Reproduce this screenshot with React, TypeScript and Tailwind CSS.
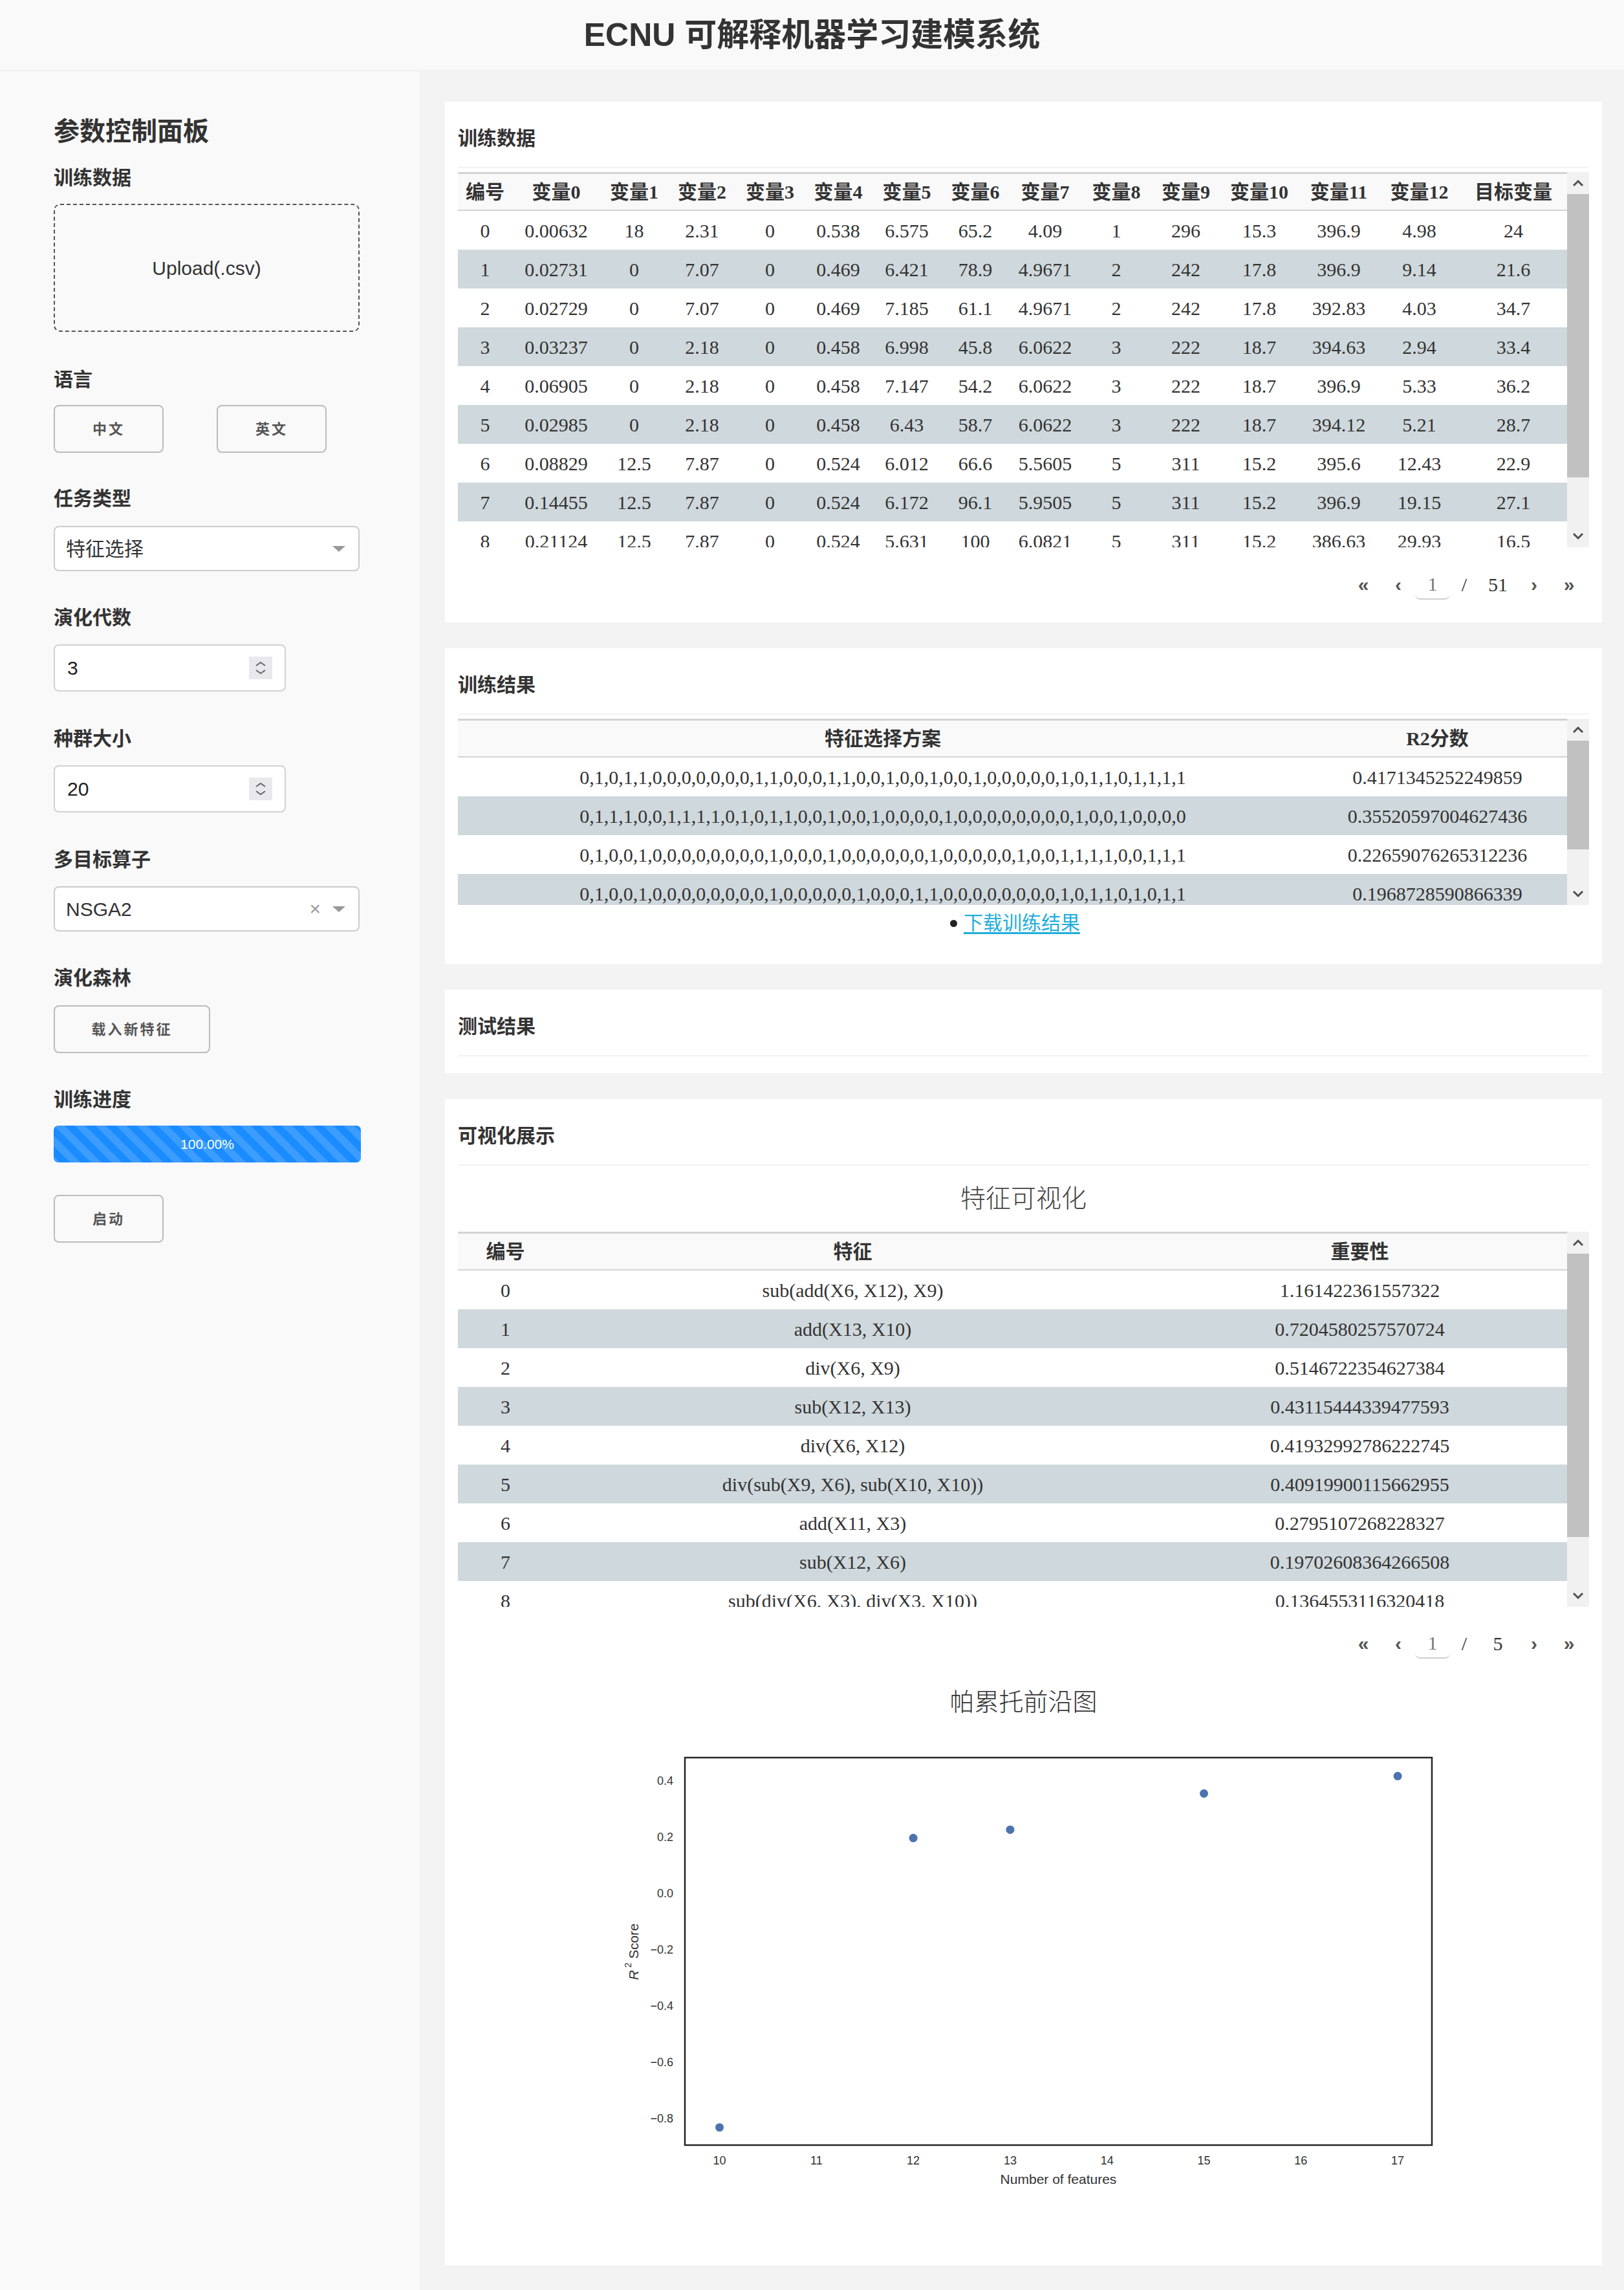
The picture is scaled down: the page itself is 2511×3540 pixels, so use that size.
import React from "react";

const SANS = "font-['Liberation_Sans','Noto_Sans_CJK_SC',sans-serif]";
const SERIF = "font-['Liberation_Serif','Noto_Sans_CJK_SC',serif]";

function Label({ children, className = "" }: { children: React.ReactNode; className?: string }) {
  return (
    <div className={`text-[30px] leading-[40px] font-bold text-[#333] ${className}`}>{children}</div>
  );
}

function Btn({ children, className = "" }: { children: React.ReactNode; className?: string }) {
  return (
    <div
      className={`h-[74px] border-2 border-[#bbb] rounded-[8px] flex items-center justify-center text-[22px] font-semibold tracking-[3px] text-[#555] ${className}`}
    >
      {children}
    </div>
  );
}

function Caret() {
  return <div className="w-0 h-0 border-x-[10px] border-x-transparent border-t-[9px] border-t-[#999]" />;
}

function Spinner() {
  return (
    <div className="w-[36px] h-[35px] bg-[#e9e9ed] flex items-center justify-center">
      <svg width="36" height="35" viewBox="0 0 36 35">
        <polyline points="11,14 18,9 25,14" fill="none" stroke="#666" strokeWidth="2" />
        <polyline points="11,21 18,26 25,21" fill="none" stroke="#666" strokeWidth="2" />
      </svg>
    </div>
  );
}

function NumberInput({ value }: { value: string }) {
  return (
    <div className="w-[359px] h-[73px] bg-white border-2 border-[#d1d1d1] rounded-[8px] flex items-center justify-between pl-[19px] pr-[19px]">
      <span className="text-[30px] text-[#222]">{value}</span>
      <Spinner />
    </div>
  );
}

function Sidebar() {
  return (
    <aside className={`w-[648px] shrink-0 bg-[#f9f9f9] pl-[83px] flex flex-col items-start ${SANS}`}>
      <div className="mt-[68px] text-[40px] leading-[50px] font-bold text-[#333]">参数控制面板</div>
      <Label className="mt-[27px]">训练数据</Label>
      <div className="mt-[20px] w-[473px] h-[198px] border-2 border-dashed border-[#555] rounded-[10px] flex items-center justify-center text-[30px] text-[#333]">
        Upload(.csv)
      </div>
      <Label className="mt-[54px]">语言</Label>
      <div className="mt-[19px] flex gap-[82px]">
        <Btn className="w-[170px]">中文</Btn>
        <Btn className="w-[170px]">英文</Btn>
      </div>
      <Label className="mt-[51px]">任务类型</Label>
      <div className="mt-[22px] w-[473px] h-[70px] bg-white border-2 border-[#ccc] rounded-[8px] flex items-center justify-between pl-[17px] pr-[20px]">
        <span className="text-[30px] text-[#333]">特征选择</span>
        <Caret />
      </div>
      <Label className="mt-[52px]">演化代数</Label>
      <div className="mt-[21px]">
        <NumberInput value="3" />
      </div>
      <Label className="mt-[53px]">种群大小</Label>
      <div className="mt-[21px]">
        <NumberInput value="20" />
      </div>
      <Label className="mt-[53px]">多目标算子</Label>
      <div className="mt-[21px] w-[473px] h-[70px] bg-white border-2 border-[#ccc] rounded-[8px] flex items-center pl-[17px] pr-[20px]">
        <span className="text-[30px] text-[#333] flex-1">NSGA2</span>
        <span className="text-[30px] leading-none text-[#999] mr-[18px]">×</span>
        <Caret />
      </div>
      <Label className="mt-[52px]">演化森林</Label>
      <Btn className="mt-[22px] w-[242px] h-[73px]">载入新特征</Btn>
      <Label className="mt-[52px]">训练进度</Label>
      <div className="mt-[20px] w-[475px] h-[57px] rounded-[7px] bg-[#1a8cff] bg-[linear-gradient(45deg,rgba(255,255,255,.15)_25%,transparent_25%,transparent_50%,rgba(255,255,255,.15)_50%,rgba(255,255,255,.15)_75%,transparent_75%,transparent)] bg-[length:32px_32px] flex items-center justify-center text-[21px] text-white">
        100.00%
      </div>
      <Btn className="mt-[50px] w-[170px] h-[73px]">启动</Btn>
    </aside>
  );
}

function Chevron({ up }: { up: boolean }) {
  return (
    <div className="h-[34px] w-[34px] flex items-center justify-center shrink-0">
      <svg width="18" height="12" viewBox="0 0 18 12">
        {up ? (
          <polyline points="2,10 9,3 16,10" fill="none" stroke="#505050" strokeWidth="3" />
        ) : (
          <polyline points="2,2 9,9 16,2" fill="none" stroke="#505050" strokeWidth="3" />
        )}
      </svg>
    </div>
  );
}

function ScrollBar({ thumb }: { thumb: number }) {
  return (
    <div className="w-[34px] shrink-0 bg-[#f1f1f1] flex flex-col">
      <Chevron up />
      <div className="w-[34px] bg-[#c1c1c1]" style={{ height: thumb }} />
      <div className="flex-1" />
      <Chevron up={false} />
    </div>
  );
}

function Grid({
  widths,
  head,
  rows,
  height,
  thumb,
}: {
  widths: number[];
  head: string[];
  rows: string[][];
  height: number;
  thumb: number;
}) {
  return (
    <div className="flex" style={{ height }}>
      <div className={`flex-1 overflow-hidden ${SERIF}`}>
        <div className="flex h-[60px] items-center bg-[#f9f9f9] border-t-[3px] border-b-2 border-[#d3d3d3]">
          {head.map((h, i) => (
            <div key={i} className="shrink-0 text-center text-[30px] font-bold text-[#333]" style={{ width: widths[i] }}>
              {h}
            </div>
          ))}
        </div>
        {rows.map((r, ri) => (
          <div key={ri} className={`flex h-[60px] items-center ${ri % 2 === 1 ? "bg-[#cfd8dc]" : "bg-white"}`}>
            {r.map((c, ci) => (
              <div key={ci} className="shrink-0 text-center text-[30px] text-[#333] whitespace-nowrap" style={{ width: widths[ci] }}>
                {c}
              </div>
            ))}
          </div>
        ))}
      </div>
      <ScrollBar thumb={thumb} />
    </div>
  );
}

function Pager({ total }: { total: string }) {
  return (
    <div className="flex justify-end items-center h-[48px] pr-[3px]">
      <div className={`w-[56px] text-center text-[30px] font-bold text-[#555] ${SANS}`}>«</div>
      <div className={`w-[52px] text-center text-[30px] font-bold text-[#555] ${SANS}`}>‹</div>
      <div className={`w-[54px] h-[48px] border-b-2 border-[#d0d0d0] rounded-b-[8px] flex items-center justify-center text-[30px] text-[#777] ${SERIF}`}>
        1
      </div>
      <div className={`w-[44px] text-center text-[30px] text-[#333] ${SERIF}`}>/</div>
      <div className={`w-[60px] text-center text-[30px] text-[#333] ${SERIF}`}>{total}</div>
      <div className={`w-[52px] text-center text-[30px] font-bold text-[#555] ${SANS}`}>›</div>
      <div className={`w-[56px] text-center text-[30px] font-bold text-[#555] ${SANS}`}>»</div>
    </div>
  );
}

function Card({ title, children }: { title: string; children?: React.ReactNode }) {
  return (
    <section className="bg-white px-[20px] pt-[20px] pb-[20px]">
      <div className={`h-[81px] pt-[22px] text-[30px] leading-[30px] font-bold text-[#333] ${SANS}`}>{title}</div>
      <div className="h-[2px] bg-[#f2f2f2]" />
      <div className="pt-[6px]">{children}</div>
    </section>
  );
}

const t1Widths = [84, 136, 105, 105, 105, 106, 106, 106, 110, 110, 105, 122, 124, 125, 166];
const t1Head = ["编号", "变量0", "变量1", "变量2", "变量3", "变量4", "变量5", "变量6", "变量7", "变量8", "变量9", "变量10", "变量11", "变量12", "目标变量"];
const t1Rows = [
  "0 0.00632 18 2.31 0 0.538 6.575 65.2 4.09 1 296 15.3 396.9 4.98 24",
  "1 0.02731 0 7.07 0 0.469 6.421 78.9 4.9671 2 242 17.8 396.9 9.14 21.6",
  "2 0.02729 0 7.07 0 0.469 7.185 61.1 4.9671 2 242 17.8 392.83 4.03 34.7",
  "3 0.03237 0 2.18 0 0.458 6.998 45.8 6.0622 3 222 18.7 394.63 2.94 33.4",
  "4 0.06905 0 2.18 0 0.458 7.147 54.2 6.0622 3 222 18.7 396.9 5.33 36.2",
  "5 0.02985 0 2.18 0 0.458 6.43 58.7 6.0622 3 222 18.7 394.12 5.21 28.7",
  "6 0.08829 12.5 7.87 0 0.524 6.012 66.6 5.5605 5 311 15.2 395.6 12.43 22.9",
  "7 0.14455 12.5 7.87 0 0.524 6.172 96.1 5.9505 5 311 15.2 396.9 19.15 27.1",
  "8 0.21124 12.5 7.87 0 0.524 5.631 100 6.0821 5 311 15.2 386.63 29.93 16.5",
  "9 0.17004 12.5 7.87 0 0.524 6.004 85.9 6.5921 5 311 15.2 386.71 17.1 18.9",
].map((r) => r.split(" "));

const t2Rows = [
  ["0,1,0,1,1,0,0,0,0,0,0,0,1,1,0,0,0,1,1,0,0,1,0,0,1,0,0,1,0,0,0,0,0,1,0,1,1,0,1,1,1,1", "0.4171345252249859"],
  ["0,1,1,1,0,0,1,1,1,1,0,1,0,1,1,0,0,1,0,0,1,0,0,0,0,1,0,0,0,0,0,0,0,0,1,0,0,1,0,0,0,0", "0.35520597004627436"],
  ["0,1,0,0,1,0,0,0,0,0,0,0,0,1,0,0,0,1,0,0,0,0,0,0,1,0,0,0,0,0,1,0,0,1,1,1,1,0,0,1,1,1", "0.22659076265312236"],
  ["0,1,0,0,1,0,0,0,0,0,0,0,0,1,0,0,0,0,0,1,0,0,0,1,1,0,0,0,0,0,0,0,0,1,0,1,1,0,1,0,1,1", "0.1968728590866339"],
  ["0,1,0,0,1,0,0,0,0,0,0,0,0,1,0,0,0,0,0,1,0,0,0,1,0,0,0,0,0,0,0,0,0,1,0,1,1,0,1,0,1,1", "-0.8315288016212571"],
];

const t3Rows = [
  ["0", "sub(add(X6, X12), X9)", "1.161422361557322"],
  ["1", "add(X13, X10)", "0.7204580257570724"],
  ["2", "div(X6, X9)", "0.5146722354627384"],
  ["3", "sub(X12, X13)", "0.43115444339477593"],
  ["4", "div(X6, X12)", "0.41932992786222745"],
  ["5", "div(sub(X9, X6), sub(X10, X10))", "0.40919900115662955"],
  ["6", "add(X11, X3)", "0.2795107268228327"],
  ["7", "sub(X12, X6)", "0.19702608364266508"],
  ["8", "sub(div(X6, X3), div(X3, X10))", "0.1364553116320418"],
  ["9", "add(X6, X3)", "0.1207716930276571"],
];

function ParetoChart() {
  const yv = [0.4, 0.2, 0.0, -0.2, -0.4, -0.6, -0.8];
  const yl = ["0.4", "0.2", "0.0", "\u22120.2", "\u22120.4", "\u22120.6", "\u22120.8"];
  const xs = [10, 11, 12, 13, 14, 15, 16, 17];
  const pts: [number, number][] = [
    [10, -0.8315],
    [12, 0.1969],
    [13, 0.2266],
    [15, 0.3552],
    [17, 0.4171],
  ];
  const X = (n: number) => 404.5 + (n - 10) * 149.8;
  const Y = (v: number) => 276 - 435 * v;
  const ff = "Liberation Sans, Arial, sans-serif";
  return (
    <svg width="1749" height="831" viewBox="0 0 1749 831" className="block">
      <rect x="351" y="66" width="1155" height="599" fill="#fff" stroke="#262626" strokeWidth="2.5" />
      {yv.map((v, i) => (
        <text key={i} x="333" y={Y(v)} fontSize="18" fill="#333" fontFamily={ff} textAnchor="end" dominantBaseline="central">
          {yl[i]}
        </text>
      ))}
      {xs.map((n) => (
        <text key={n} x={X(n)} y="689" fontSize="18" fill="#333" fontFamily={ff} textAnchor="middle" dominantBaseline="central">
          {n}
        </text>
      ))}
      <text x="928.5" y="717" fontSize="21" fill="#333" fontFamily={ff} textAnchor="middle" dominantBaseline="central">
        Number of features
      </text>
      <text
        x="271"
        y="366"
        fontSize="21"
        fill="#333"
        fontFamily={ff}
        textAnchor="middle"
        dominantBaseline="central"
        transform="rotate(-90 271 366)"
      >
        <tspan fontStyle="italic">R</tspan>
        <tspan fontSize="14" dy="-8"> 2</tspan>
        <tspan dy="8"> Score</tspan>
      </text>
      {pts.map(([n, v], i) => (
        <circle key={i} cx={X(n)} cy={Y(v)} r="6.5" fill="#4c72b0" />
      ))}
    </svg>
  );
}

export default function App() {
  return (
    <div className={`w-[2511px] min-h-[3540px] flex flex-col bg-[#f3f3f3] ${SANS}`}>
      <header className="h-[110px] shrink-0 bg-[#f9f9f9] border-b-2 border-[#f0f0f0] flex items-center justify-center">
        <h1 className="text-[50px] font-bold text-[#333] leading-none">ECNU 可解释机器学习建模系统</h1>
      </header>
      <div className="flex flex-1">
        <Sidebar />
        <main className="flex-1 bg-[#f3f3f3] pt-[47px] pl-[40px] pr-[34px] pb-[38px] flex flex-col gap-[40px]">
          <Card title="训练数据">
            <Grid widths={t1Widths} head={t1Head} rows={t1Rows} height={580} thumb={438} />
            <div className="pt-[33px] pb-[15px]">
              <Pager total="51" />
            </div>
          </Card>
          <Card title="训练结果">
            <Grid widths={[1314, 401]} head={["特征选择方案", "R2分数"]} rows={t2Rows} height={288} thumb={168} />
            <ul className="mt-[13px] mb-[28px] flex justify-center pr-[26px]">
              <li className="flex items-center gap-[10px] text-[30px] leading-[30px] text-[#222]">
                <span className="w-[11px] h-[11px] rounded-full bg-[#222]" />
                <a className="text-[#1eaedb] underline underline-offset-[4px]">下载训练结果</a>
              </li>
            </ul>
          </Card>
          <Card title="测试结果" />
          <Card title="可视化展示">
            <div className="pt-[25px] pb-[31px] text-center text-[39px] leading-[40px] font-light text-[#444]">特征可视化</div>
            <Grid widths={[147, 927, 641]} head={["编号", "特征", "重要性"]} rows={t3Rows} height={580} thumb={438} />
            <div className="pt-[32px]">
              <Pager total="5" />
            </div>
            <div className="mt-[47px] text-center text-[38px] leading-[40px] font-light text-[#333]">帕累托前沿图</div>
            <ParetoChart />
          </Card>
        </main>
      </div>
    </div>
  );
}
